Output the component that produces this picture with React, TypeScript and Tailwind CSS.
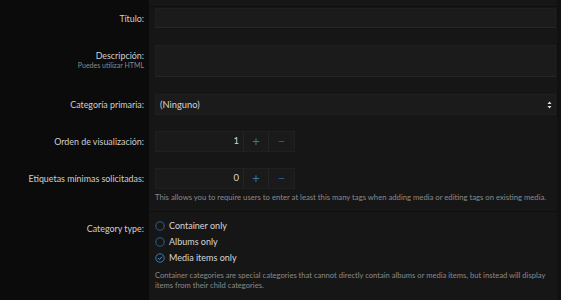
import { useState } from "react";

const font = { fontFamily: "'Lato', 'Noto Sans', sans-serif" };

function Row({
  label,
  hint,
  pt,
  pb,
  children,
}: {
  label: string;
  hint?: string;
  pt: string;
  pb: string;
  children: React.ReactNode;
}) {
  return (
    <div className="flex">
      <div className={`w-[149px] shrink-0 pr-[5px] text-right ${pt}`}>
        <div className="text-[8.9px] leading-[21px] text-[#cfcfcf]">{label}</div>
        {hint && <div className="-mt-[6px] text-[7px] leading-[10px] text-[#8a8a8a]">{hint}</div>}
      </div>
      <div className={`flex-1 bg-[#161616] pl-[6px] pr-[1px] ${pt} ${pb}`}>{children}</div>
    </div>
  );
}

function Spinner({ value }: { value: number }) {
  return (
    <div className="flex h-[21px] w-[140px] border border-[#202020] bg-[#1a1a1a] text-[9.5px]">
      <div className="flex w-[87px] items-center justify-end pr-[4px] text-[#d4d4d4]">{value}</div>
      <div className="flex w-[25px] items-center justify-center border-l border-[#242424] text-[13px] text-[#2f77b6]">+</div>
      <div className="flex flex-1 items-center justify-center border-l border-[#242424] text-[13px] text-[#245a88]">−</div>
    </div>
  );
}

function Radio({ label, checked }: { label: string; checked?: boolean }) {
  return (
    <div className="flex h-[16px] items-center gap-[4px]">
      {checked ? (
        <svg width="10" height="10" viewBox="0 0 10 10">
          <circle cx="5" cy="5" r="4.2" fill="none" stroke="#3b7bb3" strokeWidth="1" />
          <path d="M3 5.1 L4.5 6.5 L7.1 3.7" fill="none" stroke="#4a8fcc" strokeWidth="1" />
        </svg>
      ) : (
        <svg width="10" height="10" viewBox="0 0 10 10">
          <circle cx="5" cy="5" r="4.2" fill="none" stroke="#2c5f8a" strokeWidth="1.1" />
        </svg>
      )}
      <span className="text-[9px] text-[#d6d6d6]">{label}</span>
    </div>
  );
}

export default function App() {
  const [type] = useState("media");
  return (
    <div className="flex h-[300px] w-[561px] overflow-hidden bg-[#0b0b0b]" style={font}>
      <div className="flex flex-1 flex-col">
        <div className="flex h-[9px]">
          <div className="w-[149px] shrink-0" />
          <div className="flex-1 border-b border-[#0f0f0f] bg-[#161616]" />
        </div>
        <Row label="Título:" pt="pt-[1px]" pb="pb-[8px]">
          <div className="h-[20px] border border-[#1f1f1f] border-b-[#262626] bg-[#1b1b1b]" />
        </Row>
        <Row label="Descripción:" hint="Puedes utilizar HTML" pt="pt-[9px]" pb="pb-[8px]">
          <div className="h-[32px] border border-[#1f1f1f] border-b-[#262626] bg-[#1b1b1b]" />
        </Row>
        <Row label="Categoría primaria:" pt="pt-[9px]" pb="pb-[8px]">
          <div className="flex h-[21px] items-center justify-between border border-[#1f1f1f] bg-[#1b1b1b] pl-[4px] pr-[3px] text-[9.3px] text-[#d4d4d4]">
            <span>(Ninguno)</span>
            <svg width="5" height="8" viewBox="0 0 5 8">
              <path d="M2.5 0.5 L4.5 3 L0.5 3 Z M2.5 7.5 L4.5 5 L0.5 5 Z" fill="#e0e0e0" />
            </svg>
          </div>
        </Row>
        <Row label="Orden de visualización:" pt="pt-[8px]" pb="pb-[8px]">
          <Spinner value={1} />
        </Row>
        <Row label="Etiquetas mínimas solicitadas:" pt="pt-[8px]" pb="pb-[9px]">
          <Spinner value={0} />
          <p className="mt-[3px] text-[7.7px] leading-[10px] text-[#8a8a8a]">
            This allows you to require users to enter at least this many tags when adding media or editing tags on existing media.
          </p>
        </Row>
        <div className="flex">
          <div className="w-[149px] shrink-0" />
          <div className="h-px flex-1 bg-[#0f0f0f]" />
        </div>
        <Row label="Category type:" pt="pt-[6px]" pb="pb-[10px]">
          <Radio label="Container only" checked={type === "container"} />
          <Radio label="Albums only" checked={type === "albums"} />
          <Radio label="Media items only" checked={type === "media"} />
          <p className="mt-[4px] text-[7.6px] leading-[10px] text-[#8a8a8a]">
            Container categories are special categories that cannot directly contain albums or media items, but instead will display items from their child categories.
          </p>
        </Row>
      </div>
      <div className="w-[4px] shrink-0 bg-[#111111]" />
    </div>
  );
}
